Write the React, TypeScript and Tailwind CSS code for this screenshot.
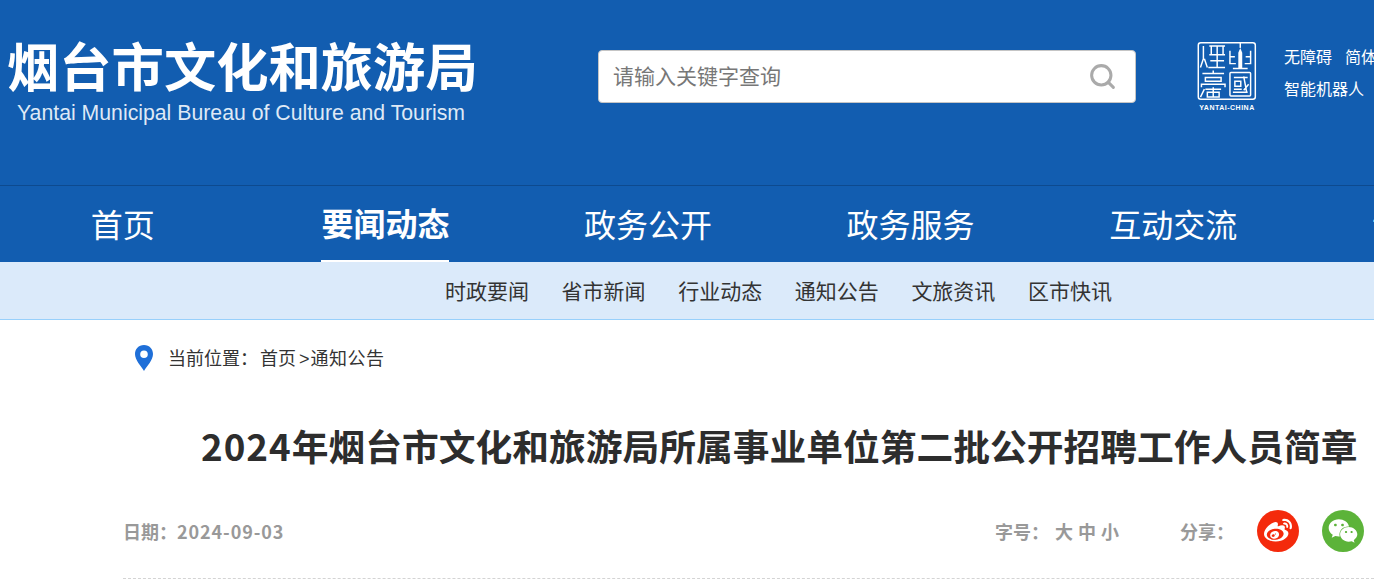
import { Search } from 'lucide-react';
import { FaWeibo, FaWeixin } from 'react-icons/fa';

const cjk = "font-['Liberation_Sans','Noto_Sans_CJK_SC',sans-serif]";
const digits = "font-['Noto_Sans_CJK_SC',sans-serif]";
const navItems = ['首页', '要闻动态', '政务公开', '政务服务', '互动交流', '专题专栏'];
const subItems = ['时政要闻', '省市新闻', '行业动态', '通知公告', '文旅资讯', '区市快讯'];

function SealLogo() {
  return (
    <svg viewBox="0 0 60 60" className="w-[60px] h-[59px]" fill="none" stroke="white" strokeWidth="1.500">
      <rect x="0.8" y="0.8" width="58" height="57.500" rx="2.5" />
      {/* left top block */}
      <path d="M6 4v13l-3 9M7 17l3 9M12 4h16M14 4v9h12V4M20 4v9M12 13h16M13 19h14M20 13v13M11 26h17" />
      {/* tower + side strokes */}
      <path d="M33 9v13h6M33 15h5M54 9v13h-6M54 15h-5M36 27h15" />
      <path d="M43.500 1v5" />
      <path d="M41.500 27V11l2-5 2 5v16z" fill="white" stroke="none" />
      {/* lower left block */}
      <path d="M5 32h22M16 29v3M8 36h16v4H8zM4 46v-3h24v3M8 48h16M10 51h12v5H10zM3 56l4-8M16 46v10" />
      {/* lower right block */}
      <rect x="33" y="31" width="21" height="24" rx="1" />
      <path d="M37 36h14M38 40h6v5h-6zM37 48h8M47 35l3 16M52 43l-5 6M36 51h15" />
    </svg>
  );
}

export default function App() {
  return (
    <div className={`w-[1374px] h-[579px] overflow-hidden bg-white ${cjk}`}>
      <header className="h-[186px] bg-[#125db0] border-b border-[#0d4a8f] flex items-start">
        <div className="w-[598px] shrink-0 pl-[7px] pt-[38px]">
          <div className="text-[52.300px] leading-[62px] font-bold text-white whitespace-nowrap">烟台市文化和旅游局</div>
          <div className="pl-[10px] text-[21.250px] leading-[26px] text-[#dfe9f6] whitespace-nowrap">
            Yantai Municipal Bureau of Culture and Tourism
          </div>
        </div>
        <div className="mt-[50px] w-[538px] h-[53px] shrink-0 bg-white rounded-sm border border-[#c5c5c5] flex items-center justify-between pl-[14px] pr-[18px]">
          <span className="text-[21px] pt-[1px] text-[#777777]">请输入关键字查询</span>
          <Search className="w-[29px] h-[29px] text-[#aaaaaa]" strokeWidth={2.5} />
        </div>
        <div className="ml-[61px] mt-[42px] w-[60px] shrink-0 flex flex-col items-center">
          <SealLogo />
          <span className="mt-[2px] text-[7px] leading-[9px] font-bold tracking-[0.5px] text-white whitespace-nowrap">YANTAI-CHINA</span>
        </div>
        <div className="ml-[27px] mt-[42px] text-[16px] leading-[32px] text-white whitespace-nowrap">
          <div className="flex gap-[13px]">
            <span>无障碍</span>
            <span>简体</span>
          </div>
          <div>智能机器人</div>
        </div>
      </header>

      <nav className="h-[76px] bg-[#125db0] flex ml-[-8.500px]">
        {navItems.map((item) => (
          <div key={item} className="w-[262.600px] shrink-0 flex justify-center">
            <a
              className={`h-full flex items-center text-[32px] text-white whitespace-nowrap pt-[4px] ${
                item === '要闻动态' ? 'font-bold border-b-2 border-white' : ''
              }`}
            >
              {item}
            </a>
          </div>
        ))}
      </nav>

      <div className="h-[58px] bg-[#dbeafa] border-b border-[#98d0fb] flex pl-[445px] gap-[32.600px] items-center pt-[2px]">
        {subItems.map((item) => (
          <a key={item} className="text-[21px] text-[#333333] whitespace-nowrap">
            {item}
          </a>
        ))}
      </div>

      <div className="h-[76px] flex items-center pl-[134px] pb-[1px]">
        <svg viewBox="0 0 20 26" className="w-[20px] h-[26px]">
          <path
            fillRule="evenodd"
            fill="#1f6fd8"
            d="M10 0C4.500 0 1 4 1 9c0 6 6 12 9 17 3-5 9-11 9-17 0-5-3.500-9-9-9zm0 5.500a3.800 3.800 0 1 1 0 7.600 3.800 3.800 0 0 1 0-7.600z"
          />
        </svg>
        <span className="ml-[14px] pt-[3px] text-[18px] text-[#333333] whitespace-nowrap">
          当前位置：<span className="ml-[2px]">首页</span>
          <span className="ml-[3px] mr-[1px]">&gt;</span>
          <span className="tracking-[0.5px]">通知公告</span>
        </span>
      </div>

      <h1 className="pl-[201px] mt-[17px] h-[64px] text-[36.750px] leading-[64px] font-bold text-[#2d2d2d] whitespace-nowrap">
        <span className={`${digits} tracking-[1px]`}>2024</span>年烟台市文化和旅游局所属事业单位第二批公开招聘工作人员简章
      </h1>

      <div className="ml-[123px] mt-[30px] h-[72px] border-b border-dashed border-[#d4d4d4] flex items-start pt-[3px] text-[18px] font-bold text-[#999999]">
        <span className={`w-[872px] leading-[42px] shrink-0 whitespace-nowrap ${digits}`}>
          日期：<span className="tracking-[0.9px]">2024-09-03</span>
        </span>
        <span className="w-[185px] leading-[46px] shrink-0 whitespace-nowrap">
          字号：<span className="ml-[6px]">大 中 小</span>
        </span>
        <span className="w-[77px] leading-[46px] shrink-0 whitespace-nowrap">分享：</span>
        <span className="w-[42px] h-[42px] shrink-0 rounded-full bg-[#f42a0c] flex items-center justify-center text-white">
          <FaWeibo className="w-[28px] h-[28px]" />
        </span>
        <span className="ml-[23px] w-[42px] h-[42px] shrink-0 rounded-full bg-[#5cb339] flex items-center justify-center text-white">
          <FaWeixin className="w-[30px] h-[30px]" />
        </span>
      </div>
    </div>
  );
}
